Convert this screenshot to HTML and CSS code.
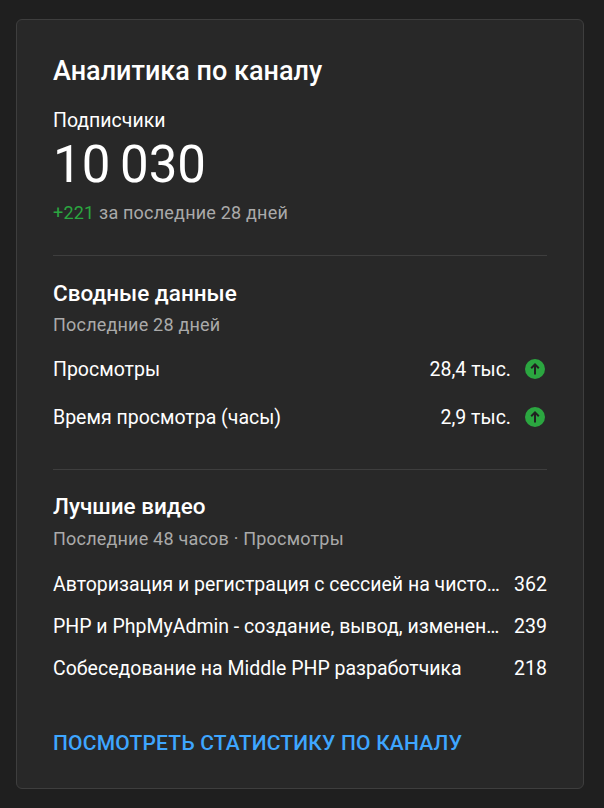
FILE: index.html
```html
<!DOCTYPE html>
<html lang="ru">
<head>
<meta charset="utf-8">
<title>Аналитика по каналу</title>
<link rel="stylesheet" href="styles.css">
</head>
<body>
<main class="card">
  <h1 class="title">Аналитика по каналу</h1>
  <div class="subs-label">Подписчики</div>
  <div class="subs-count">10&nbsp;030</div>
  <div class="subs-delta"><span class="plus">+221</span> за последние 28 дней</div>
  <hr class="divider first">
  <h2 class="heading">Сводные данные</h2>
  <div class="note">Последние 28 дней</div>
  <div class="stats">
    <div class="stat">
      <span>Просмотры</span>
      <span class="stat-value">28,4 тыс.
        <svg class="up" viewBox="0 0 20 20" width="20" height="20"><circle cx="10" cy="10" r="10" fill="#2ba640"/><path d="M10 15.5V6M6.2 9.2 10 5.4l3.8 3.8" fill="none" stroke="#212121" stroke-width="2"/></svg>
      </span>
    </div>
    <div class="stat">
      <span>Время просмотра (часы)</span>
      <span class="stat-value">2,9 тыс.
        <svg class="up" viewBox="0 0 20 20" width="20" height="20"><circle cx="10" cy="10" r="10" fill="#2ba640"/><path d="M10 15.5V6M6.2 9.2 10 5.4l3.8 3.8" fill="none" stroke="#212121" stroke-width="2"/></svg>
      </span>
    </div>
  </div>
  <hr class="divider second">
  <h2 class="heading">Лучшие видео</h2>
  <div class="note last">Последние 48 часов · Просмотры</div>
  <div class="videos">
    <div class="video"><span class="video-name">Авторизация и регистрация с сессией на чистом PHP и MySQL</span><span class="video-count">362</span></div>
    <div class="video"><span class="video-name">PHP и PhpMyAdmin - создание, вывод, изменение и удаление данных</span><span class="video-count">239</span></div>
    <div class="video"><span class="video-name">Собеседование на Middle PHP разработчика</span><span class="video-count">218</span></div>
  </div>
  <a class="link" href="#">Посмотреть статистику по каналу</a>
</main>
</body>
</html>
```
FILE: styles.css
```css
* { box-sizing: border-box; }
html, body { margin: 0; height: 100%; }
body {
  background: #1f1f1f;
  padding: 19px 20px 19px 16px;
  font-family: Roboto, "Noto Sans", sans-serif;
  color: #fff;
}
.card {
  width: 568px;
  height: 770px;
  background: #282828;
  border: 1px solid #3e3e3e;
  border-radius: 6px;
  padding: 32px 36px 0;
}
.title { margin: 0; font-size: 27px; line-height: 38px; font-weight: 500; }
.subs-label { margin-top: 19px; font-size: 19.5px; line-height: 24px; }
.subs-count { margin-top: 2px; font-size: 51px; line-height: 60px; word-spacing: -3px; }
.subs-delta { margin-top: 6px; font-size: 18px; line-height: 24px; color: #aaa; letter-spacing: .2px; }
.plus { color: #2ba640; }
.divider { margin: 0; border: 0; border-top: 1px solid #3e3e3e; }
.divider.first { margin-top: 30px; }
.divider.second { margin-top: 28px; }
.heading { margin: 22px 0 0; font-size: 22.5px; line-height: 30px; font-weight: 500; }
.divider.second + .heading { margin-top: 21px; }
.note { margin-top: 5px; font-size: 18px; line-height: 24px; color: #aaa; letter-spacing: .2px; }
.note.last { margin-top: 6px; }
.stats { margin-top: 8px; display: flex; flex-direction: column; }
.stat {
  height: 48px;
  display: flex; justify-content: space-between; align-items: center;
  font-size: 19.5px;
}
.stat-value { display: flex; align-items: center; gap: 14px; }
.up { display: block; margin-right: 2px; }
.videos { margin-top: 22px; display: flex; flex-direction: column; gap: 18px; }
.video {
  display: flex; justify-content: space-between; gap: 14px;
  font-size: 19.5px; line-height: 24px;
}
.video-name { flex: 1; min-width: 0; overflow: hidden; white-space: nowrap; text-overflow: ellipsis; }
.video-count { flex: none; }
.link {
  display: block;
  margin-top: 48px;
  font-size: 21px; line-height: 28px; font-weight: 500; letter-spacing: .2px;
  color: #3ea6ff; text-decoration: none; text-transform: uppercase;
}
```
